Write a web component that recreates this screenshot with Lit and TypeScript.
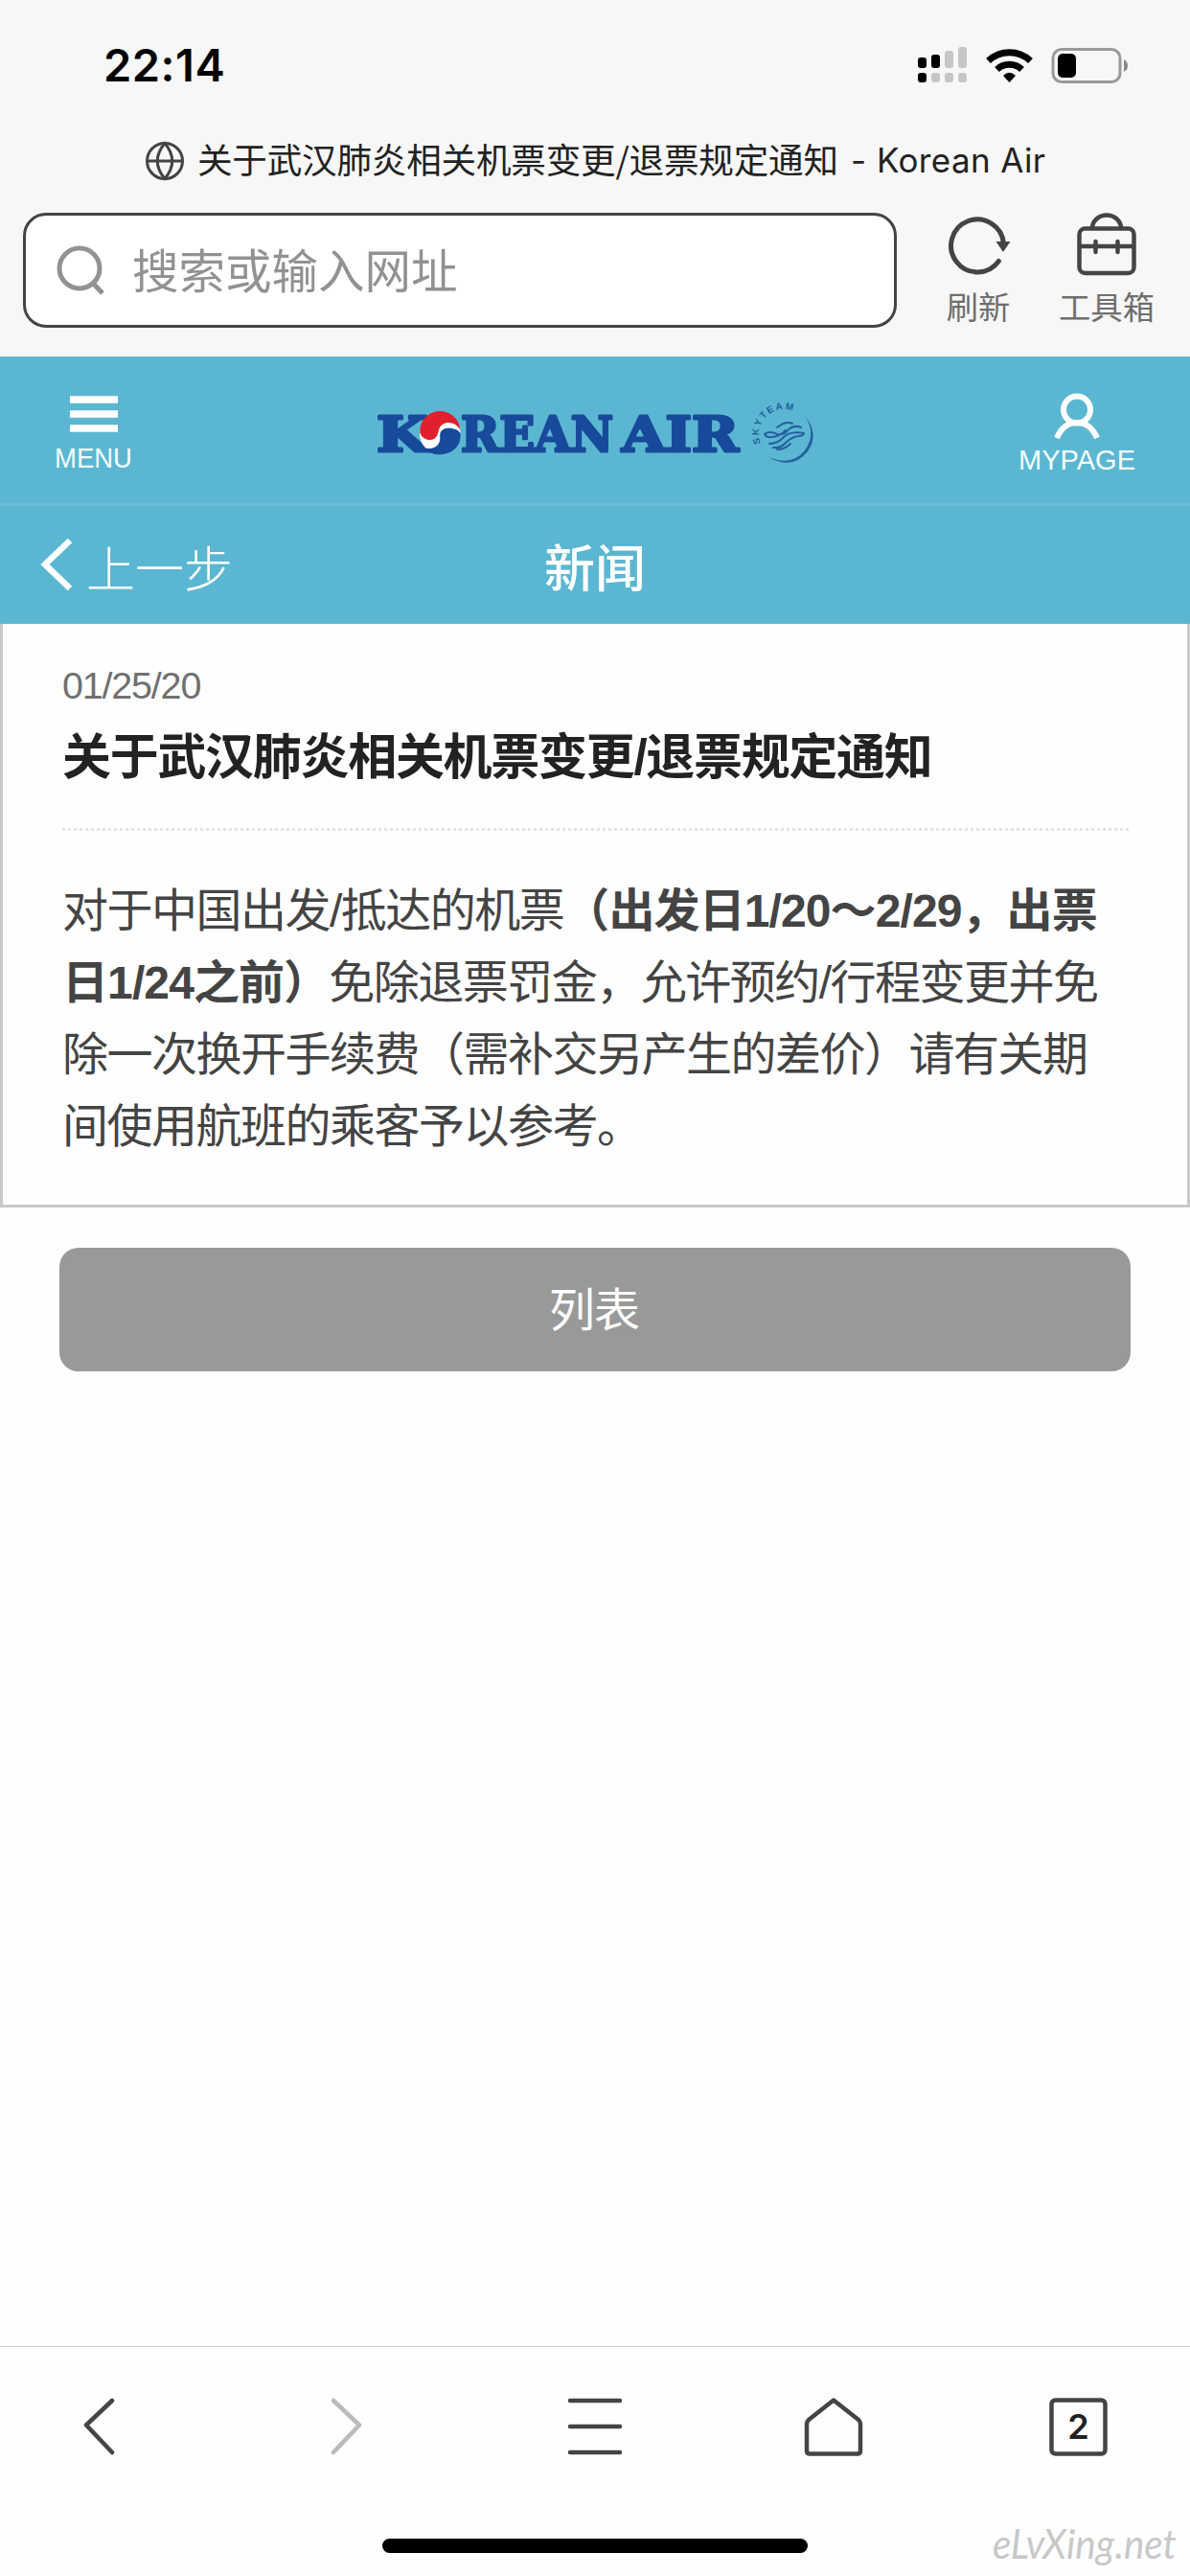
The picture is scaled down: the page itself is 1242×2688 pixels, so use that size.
import { LitElement, html, css } from "lit";
import { customElement } from "lit/decorators.js";

const lines = [
  html`对于中国出发/抵达的机票<b>（出发日1/20～2/29，出票</b>`,
  html`<b>日1/24之前）</b>免除退票罚金，允许预约/行程变更并免`,
  html`除一次换开手续费（需补交另产生的差价）请有关期`,
  html`间使用航班的乘客予以参考。`,
];

@customElement("browser-bar")
class BrowserBar extends LitElement {
  static styles = css`
    :host { display: block; height: 372px; background: #f7f7f7; font-family: Inter, "Noto Sans CJK SC", sans-serif; }
    .status { display: flex; justify-content: space-between; align-items: center; height: 136px; padding: 0 64px 0 108px; box-sizing: border-box; }
    .time { font-size: 47px; font-weight: 600; line-height: 60px; color: #000; letter-spacing: 0.5px; }
    .title { display: flex; align-items: center; height: 64px; padding-left: 152px; gap: 14px; white-space: nowrap; }
    .title svg { flex: none; overflow: visible; }
    .row { display: flex; padding: 22px 0 0 24px; }
    .search { display: flex; align-items: center; width: 912px; height: 120px; box-sizing: border-box; border: 3px solid #444; border-radius: 24px; background: #fff; padding-left: 32px; gap: 27px; font: 48.5px/60px "Noto Sans CJK SC", sans-serif; color: #929292; }
    .search span { padding-bottom: 5px; }
    .tool { display: flex; flex-direction: column; align-items: center; font: 33.3px/40px "Noto Sans CJK SC", sans-serif; color: #6e6e6e; gap: 9px; white-space: nowrap; }
    .refresh { margin-left: 50px; width: 70px; }
    .box { margin-left: 48px; width: 102px; }
    svg { display: block; }
    .tool svg { overflow: visible; }
    .ink { fill: #222; font: 35px Inter, sans-serif; }
    .cjk { font: 36.6px "Noto Sans CJK SC", sans-serif; }
  `;
  render() {
    return html`
      <div class="status">
        <span class="time">22:14</span>
        <svg width="220" height="40" viewBox="958 47 220 40">
          <g fill="#000">
            <rect x="958" y="59" width="9" height="11" rx="3" /><rect x="972" y="56" width="9" height="14" rx="3" /><rect x="958" y="75" width="9" height="10" rx="3" />
          </g>
          <g fill="#c6c6c6">
            <rect x="986" y="52" width="9" height="18" rx="3" /><rect x="1000" y="48" width="9" height="22" rx="3" />
            <rect x="972" y="75" width="9" height="10" rx="3" /><rect x="986" y="75" width="9" height="10" rx="3" /><rect x="1000" y="75" width="9" height="10" rx="3" />
          </g>
          <path d="M1031.500 62.500A32 32 0 0 1 1075.500 62.500M1040.500 71.500A19 19 0 0 1 1066.500 71.500" fill="none" stroke="#000" stroke-width="7" />
          <path d="M1053.500 85L1047 78Q1053.500 71.500 1060 78Z" fill="#000" />
          <rect x="1099" y="50.500" width="70" height="34" rx="9" fill="none" stroke="#999" stroke-width="3" />
          <rect x="1104" y="55" width="19" height="25" rx="5" />
          <path d="M1173 61Q1177 63 1177 67.500T1173 74Z" fill="#888" />
        </svg>
      </div>
      <div class="title">
        <svg width="40" height="40" viewBox="0 0 40 40" fill="none" stroke="#444" stroke-width="3">
          <circle cx="20" cy="20" r="18.500" /><path d="M1.500 20H38.500M20 1.500Q4.500 20 20 38.500Q35.500 20 20 1.500Z" />
        </svg>
        <svg width="900" height="64" class="ink">
          <text class="cjk" x="0" y="45" textLength="669">关于武汉肺炎相关机票变更/退票规定通知</text>
          <text x="682" y="44">-</text>
          <text x="709" y="44" textLength="176">Korean Air</text>
        </svg>
      </div>
      <div class="row">
        <div class="search">
          <svg width="52" height="54" fill="none" stroke="#929292" stroke-width="5"><circle cx="24" cy="25" r="21" /><path d="M38.500 41L48 51" /></svg>
          <span>搜索或输入网址</span>
        </div>
        <div class="tool refresh">
          <svg width="66" height="68" fill="none" stroke="#444" stroke-width="5" stroke-linecap="round">
            <path d="M54.400 50.500A27.500 27.500 0 1 1 59.500 32" /><path d="M51.500 30H66.500L59 41Z" fill="#444" stroke="none" />
          </svg>
          <span>刷新</span>
        </div>
        <div class="tool box">
          <svg width="62" height="68" fill="none" stroke="#444" stroke-width="4.500" stroke-linecap="round">
            <rect x="2.500" y="16.500" width="57" height="46.500" rx="6" /><path d="M16 16A15 13.500 0 0 1 46 16M3 35H59M19.500 30V41M42.500 30V41" />
          </svg>
          <span>工具箱</span>
        </div>
      </div>`;
  }
}

@customElement("site-header")
class SiteHeader extends LitElement {
  static styles = css`
    :host { display: block; background: #5bb7d1; color: #fff; }
    svg { display: block; overflow: visible; flex: none; }
    .brand { display: flex; height: 153px; border-bottom: 3px solid #6bbdd6; padding-left: 53px; }
    .logo { margin-left: 245px; }
    .my { margin-left: 202px; }
    .cap { font: 30px "Liberation Sans", sans-serif; fill: #f2fdff; }
    .kal { font: bold 50px "DejaVu Serif", serif; fill: #184a9b; stroke: #184a9b; stroke-width: 3px; stroke-linejoin: round; }
    .sky { font: bold 10px "Liberation Sans", sans-serif; fill: #24609f; }
    .sub { display: grid; grid-template-columns: 1fr auto 1fr; align-items: center; height: 123px; font-family: "Noto Sans CJK SC", sans-serif; }
    .back { display: flex; align-items: center; padding-left: 42px; gap: 14px; font-size: 51px; font-weight: 300; line-height: 60px; }
    .back span { padding-top: 2px; }
    .name { font-size: 53px; font-weight: 500; line-height: 60px; }
  `;
  render() {
    return html`
      <div class="brand">
        <svg width="90" height="153" viewBox="53 372 90 153">
          <path d="M73 417H123M73 432H123M73 447H123" stroke="#fff" stroke-width="7.500" />
          <text class="cap" x="57" y="488" textLength="81" lengthAdjust="spacingAndGlyphs">MENU</text>
        </svg>
        <svg class="logo" width="470" height="153" viewBox="388 372 470 153">
          <g class="kal">
            <text x="393" y="471" textLength="54" lengthAdjust="spacingAndGlyphs">K</text>
            <text x="481" y="471" textLength="159" lengthAdjust="spacingAndGlyphs">REAN</text>
            <text x="649" y="471" textLength="122" lengthAdjust="spacingAndGlyphs">AIR</text>
          </g>
          <g transform="translate(385 415) scale(.3333)">
            <circle cx="223" cy="113" r="64" fill="#fff" />
            <path d="M160 110A63 63 0 0 1 286 100C275 78 240 68 224 90C215 102 220 118 205 128C190 137 168 130 160 110Z" fill="#e0202c" />
            <path d="M287 112C290 150 262 178 222 178C200 178 182 170 172 155C192 165 215 155 220 140C228 125 215 112 232 100C250 90 280 98 287 112Z" fill="#184a9b" />
          </g>
          <path id="ring" d="M793.900 462.700A26 26 0 0 1 831 430.500" fill="none" />
          <text class="sky"><textPath href="#ring" textLength="60">SKYTEAM</textPath></text>
          <path d="M839 433Q856 452 843 471Q827 491 802 477Q826 487 840 470Q853 451 839 433Z" fill="#24609f" />
          <path d="M811 446Q820 439 827 442M798 453Q803 449 811 453Q818 455 823 448Q829 443 836 446M798 453Q800 457 806 456Q813 456 820 449M803 463Q811 463 817 457Q824 449 839 452M807 467Q815 468 821 461Q828 455 835 455Q839 454 839 452M811 469Q819 469 825 463" fill="none" stroke="#24609f" stroke-width="2" stroke-linecap="round" />
        </svg>
        <svg class="my" width="130" height="153" viewBox="1060 372 130 153">
          <circle cx="1124" cy="427.500" r="14" fill="none" stroke="#fff" stroke-width="6" />
          <path d="M1103 457Q1110 441 1124 441T1145 457" fill="none" stroke="#fff" stroke-width="6" />
          <text class="cap" x="1063" y="490" textLength="122" lengthAdjust="spacingAndGlyphs">MYPAGE</text>
        </svg>
      </div>
      <div class="sub">
        <div class="back">
          <svg width="34" height="56" fill="none" stroke="#fff" stroke-width="6.500"><path d="M31 2L5 27L31 52" /></svg>
          <span>上一步</span>
        </div>
        <div class="name">新闻</div>
      </div>`;
  }
}

@customElement("bottom-nav")
class BottomNav extends LitElement {
  static styles = css`
    :host { display: block; height: 240px; box-sizing: border-box; border-top: 1px solid #ccc; position: relative; }
    .icons { display: flex; padding: 52px 0 0 85px; }
    svg { display: block; flex: none; overflow: visible; }
    .fwd { margin-left: 222px; }
    .menu { margin-left: 212px; }
    .house { margin-left: 187px; }
    .tabs { margin-left: 193px; }
    .count { font: 600 36px Inter, sans-serif; fill: #222; stroke: none; }
    .home { width: 444px; height: 15px; border-radius: 8px; background: #000; margin: 84px auto 0; }
    .mark { position: absolute; right: 2px; bottom: 0; }
    .mark text { font: italic 400 42px "Brush Script MT", "Lucida Handwriting", Lato, cursive; fill: #c8c8c8; }
  `;
  render() {
    return html`
      <div class="icons">
        <svg width="36" height="64" fill="none" stroke="#444" stroke-width="4.500" stroke-linecap="round" stroke-linejoin="round"><path d="M32 4L5 29.500L32 58" /></svg>
        <svg class="fwd" width="36" height="64" fill="none" stroke="#bbb" stroke-width="4.500" stroke-linecap="round" stroke-linejoin="round"><path d="M5 4L32 29.500L5 58" /></svg>
        <svg class="menu" width="60" height="64" stroke="#444" stroke-width="4.500" stroke-linecap="round"><path d="M4 4H56M4 31H56M4 58H56" /></svg>
        <svg class="house" width="64" height="64" fill="none" stroke="#444" stroke-width="4.500" stroke-linejoin="round"><path d="M32 3.500L58 24Q60 26 60 28V56Q60 59.500 57 59.500H7Q4 59.500 4 56V28Q4 26 6 24Z" /></svg>
        <svg class="tabs" width="61" height="64" fill="none" stroke="#444" stroke-width="4.500"><rect x="2.500" y="3.500" width="56" height="56" rx="4" /><text class="count" x="30.500" y="44" text-anchor="middle">2</text></svg>
      </div>
      <div class="home"></div>
      <svg class="mark" width="204" height="62"><text x="0" y="44" textLength="192" lengthAdjust="spacingAndGlyphs">eLvXing.net</text></svg>`;
  }
}

@customElement("app-root")
export class AppRoot extends LitElement {
  static styles = css`
    :host { display: flex; flex-direction: column; width: 1242px; height: 2688px; background: #fefefe; overflow: hidden; font-family: "Liberation Sans", "Noto Sans CJK SC", sans-serif; }
    .article { height: 609px; box-sizing: border-box; border: 3px solid #c8c8c8; border-top: 0; padding: 37px 61px 0 62px; white-space: nowrap; }
    .date { font-size: 39.5px; line-height: 54px; color: #707070; letter-spacing: -1.2px; }
    h1 { margin: 0; font-size: 51px; line-height: 80px; font-weight: 700; color: #222; letter-spacing: -1.3px; padding-top: 9px; }
    .rule { height: 3px; margin-top: 33px; background: repeating-linear-gradient(90deg, #e4e4e4 0 3px, transparent 3px 6px); }
    .body { padding-top: 46px; font-size: 48px; line-height: 75px; color: #444; letter-spacing: -1.5px; }
    .body div { height: 75px; }
    b { font-weight: 700; letter-spacing: -0.9px; }
    .list { flex: none; margin: 42px 62px 0; height: 129px; border: 0; border-radius: 20px; background: #999; color: #fff; font: 48px/60px "Noto Sans CJK SC", sans-serif; letter-spacing: -1px; padding: 0 2px 7px 0; }
    bottom-nav { margin-top: auto; }
    browser-bar, site-header, bottom-nav { flex: none; }
  `;
  render() {
    return html`
      <browser-bar></browser-bar>
      <site-header></site-header>
      <div class="article">
        <div class="date">01/25/20</div>
        <h1>关于武汉肺炎相关机票变更/退票规定通知</h1>
        <div class="rule"></div>
        <div class="body">${lines.map((l) => html`<div>${l}</div>`)}</div>
      </div>
      <button class="list">列表</button>
      <bottom-nav></bottom-nav>`;
  }
}
